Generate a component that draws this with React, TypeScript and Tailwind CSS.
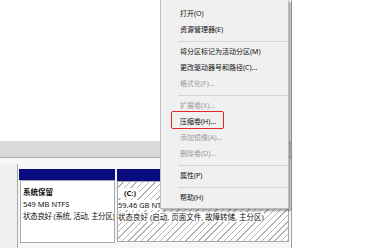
import React from "react";

const font = "font-['Noto_Sans','Noto_Sans_CJK_SC',sans-serif]";

type Item = { label: string; disabled?: boolean; boxed?: boolean } | "sep";

const items: Item[] = [
  { label: "打开(O)" },
  { label: "资源管理器(E)" },
  "sep",
  { label: "将分区标记为活动分区(M)" },
  { label: "更改驱动器号和路径(C)..." },
  { label: "格式化(F)...", disabled: true },
  "sep",
  { label: "扩展卷(X)...", disabled: true },
  { label: "压缩卷(H)...", boxed: true },
  { label: "添加镜像(A)...", disabled: true },
  { label: "删除卷(D)...", disabled: true },
  "sep",
  { label: "属性(P)" },
  "sep",
  { label: "帮助(H)" },
];

export default function App() {
  return (
    <div className={`relative w-[372px] h-[248px] bg-white overflow-hidden flex ${font}`}>
      {/* window */}
      <div className="w-[292px] h-full border-r border-[#a3a3a3] flex flex-col">
        <div className="h-[141px] bg-white" />
        <div className="h-[16px] bg-[#d9d9d9]" />
        <div className="h-[1px] bg-[#a9a9a9]" />
        <div className="flex-1 bg-[#f6f6f6] flex">
          <div className="w-[18px] mt-[6px] bg-[#f0f0f0] border-r border-[#a8a8a8]" />
          <div className="ml-[1px] pt-[11px] flex gap-[2px]">
            {/* partition 1 */}
            <div className="w-[96px] flex flex-col">
              <div className="h-[11px] bg-[#0b0b80]" />
              <div className="h-[63px] border border-[#a8a8a8] bg-white ml-[1px] pt-[5px] pl-[2px] overflow-hidden text-[7.5px] leading-[12px] text-[#111] whitespace-nowrap">
                <div className="font-bold">系统保留</div>
                <div>549 MB NTFS</div>
                <div className="tracking-[-0.3px]">状态良好 (系统, 活动, 主分区)</div>
              </div>
            </div>
            {/* partition 2 */}
            <div className="w-[172px] flex flex-col">
              <div className="h-[12px] bg-[#0b0b80]" />
              <div className="h-[61px] border border-[#a8a8a8] bg-[repeating-linear-gradient(135deg,#ffffff_0px,#ffffff_3.5px,#b4b4b4_3.5px,#b4b4b4_4.5px)] pt-[5px] overflow-hidden text-[7.5px] leading-[12px] text-[#111] whitespace-nowrap">
                <div>
                  <span className="bg-white font-bold pl-[6px] pr-[3px]">(C:)</span>
                </div>
                <div>
                  <span className="bg-white">59.46 GB NTFS</span>
                </div>
                <div>
                  <span className="bg-white">状态良好 (启动, 页面文件, 故障转储, 主分区)</span>
                </div>
              </div>
            </div>
          </div>
        </div>
      </div>

      {/* context menu */}
      <div className="absolute left-[160px] top-0 w-[129px] bg-[#f0f0f0] border border-t-0 border-[#bdbdbd] shadow-[2px_2px_2px_rgba(0,0,0,0.35)] pt-[6px] pb-[2px] text-[7px]">
        {items.map((it, i) =>
          it === "sep" ? (
            <div key={i} className="h-[6px] flex items-center pl-[17px]">
              <div className="h-[1px] w-full bg-[#d4d4d4]" />
            </div>
          ) : (
            <div
              key={i}
              className={`relative h-[16px] flex items-center pl-[19px] whitespace-nowrap ${
                it.disabled ? "text-[#9c9c9c]" : "text-[#111]"
              }`}
            >
              {it.label}
              {it.boxed && (
                <div className="absolute left-[10px] top-[-3px] w-[53px] h-[18px] border-[1.5px] border-[#e3262b] rounded-[2px]" />
              )}
            </div>
          )
        )}
      </div>
    </div>
  );
}
